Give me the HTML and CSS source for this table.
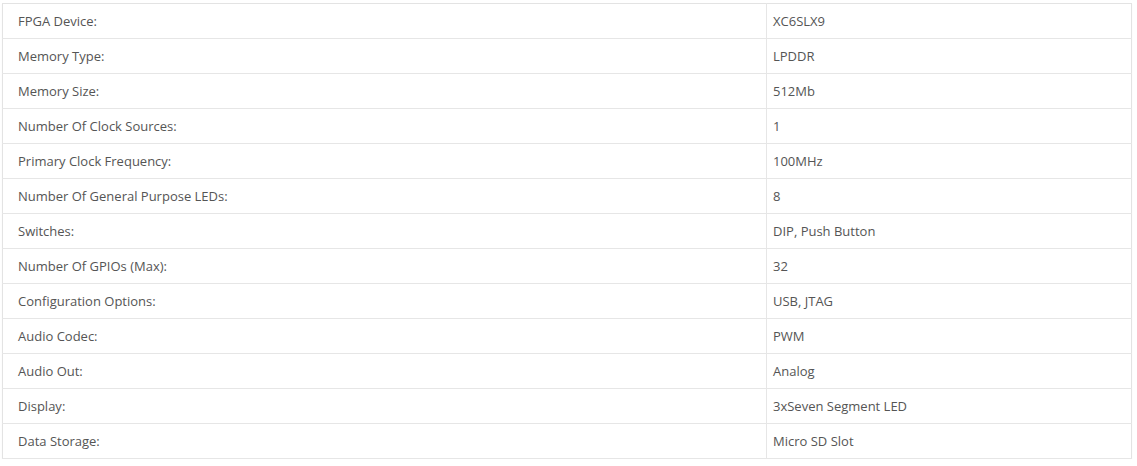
FILE: index.html
```html
<!DOCTYPE html>
<html>
<head>
<meta charset="utf-8">
<link rel="stylesheet" href="styles.css">
</head>
<body>
<div class="wrap">
<table class="specs">
<tbody>
<tr><td class="k">FPGA Device:</td><td class="v">XC6SLX9</td></tr>
<tr><td class="k">Memory Type:</td><td class="v">LPDDR</td></tr>
<tr><td class="k">Memory Size:</td><td class="v">512Mb</td></tr>
<tr><td class="k">Number Of Clock Sources:</td><td class="v">1</td></tr>
<tr><td class="k">Primary Clock Frequency:</td><td class="v">100MHz</td></tr>
<tr><td class="k">Number Of General Purpose LEDs:</td><td class="v">8</td></tr>
<tr><td class="k">Switches:</td><td class="v">DIP, Push Button</td></tr>
<tr><td class="k">Number Of GPIOs (Max):</td><td class="v">32</td></tr>
<tr><td class="k">Configuration Options:</td><td class="v">USB, JTAG</td></tr>
<tr><td class="k">Audio Codec:</td><td class="v">PWM</td></tr>
<tr><td class="k">Audio Out:</td><td class="v">Analog</td></tr>
<tr><td class="k">Display:</td><td class="v">3xSeven Segment LED</td></tr>
<tr><td class="k">Data Storage:</td><td class="v">Micro SD Slot</td></tr>
</tbody>
</table>
</div>
</body>
</html>
```
FILE: styles.css
```css
html, body {
  margin: 0;
  padding: 0;
  background: #fff;
}
.wrap {
  padding: 3px 5px 0 2px;
}
.specs {
  width: 1130px;
  border-collapse: collapse;
  font-family: "Open Sans", sans-serif;
  font-size: 13px;
  color: #555;
  border: 1px solid #e3e3e3;
  box-shadow: 0 1px 1px rgba(0,0,0,0.06);
}
.specs td {
  height: 35px;
  padding: 0;
  border-bottom: 1px solid #e6e6e6;
  vertical-align: middle;
  box-sizing: border-box;
}
.specs td.k {
  width: 764px;
  padding-left: 15px;
  border-right: 1px solid #e6e6e6;
}
.specs td.v {
  padding-left: 6px;
}
```
